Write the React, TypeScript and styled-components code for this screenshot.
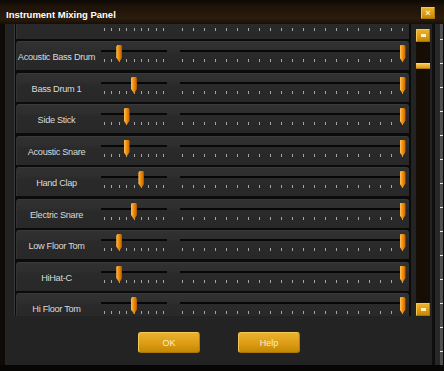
import React, { useLayoutEffect, useRef } from 'react'
import styled, { createGlobalStyle } from 'styled-components'

const GlobalStyle = createGlobalStyle`
  html, body {
    margin: 0;
    padding: 0;
    background: #070605;
  }
  body {
    font-family: 'Liberation Sans', Arial, sans-serif;
  }
`

type Instrument = { name: string; pan?: number; volume?: number }

// first entry is the row scrolled half out of view
const instruments: Instrument[] = [
  { name: '' },
  { name: 'Acoustic Bass Drum', pan: 2, volume: 20 },
  { name: 'Bass Drum 1', pan: 4, volume: 20 },
  { name: 'Side Stick', pan: 3, volume: 20 },
  { name: 'Acoustic Snare', pan: 3, volume: 20 },
  { name: 'Hand Clap', pan: 5, volume: 20 },
  { name: 'Electric Snare', pan: 4, volume: 20 },
  { name: 'Low Floor Tom', pan: 2, volume: 20 },
  { name: 'HiHat-C', pan: 2, volume: 20 },
  { name: 'Hi Floor Tom', pan: 4, volume: 20 },
]

const SCROLL_OFFSET = 17

const Screen = styled.div`
  width: 444px;
  height: 371px;
  display: flex;
  flex-direction: column;
  background: #070605;
  overflow: hidden;
`

const TitleBar = styled.div`
  height: 24px;
  flex-shrink: 0;
  box-sizing: border-box;
  display: flex;
  align-items: center;
  justify-content: space-between;
  padding: 2px 9px 0 6px;
  background: linear-gradient(#0c0804 0%, #1d1309 25%, #2b1c0c 78%, #160e06 100%);
`

const Title = styled.span`
  color: #ffffff;
  font-weight: bold;
  font-size: 9.5px;
  margin-top: 2px;
`

const GoldButton = styled.button`
  box-sizing: border-box;
  margin: 0;
  padding: 0;
  font-family: 'Liberation Sans', Arial, sans-serif;
  color: #fbeec4;
  background: linear-gradient(#eab22c 0%, #dc9c14 55%, #c48806 100%);
  border: 1px solid #f4c758;
  border-bottom-color: #a97408;
  border-right-color: #b37c0a;
  display: flex;
  align-items: center;
  justify-content: center;
`

const CloseButton = styled(GoldButton)`
  width: 14px;
  height: 12px;
  border-radius: 1px;
  font-size: 9px;
  font-weight: bold;
  line-height: 1;
`

const Middle = styled.div`
  height: 341px;
  flex-shrink: 0;
  display: flex;
`

const LeftFrame = styled.div`
  width: 5px;
  background: #0e0b07;
`

const Body = styled.div`
  width: 427px;
  box-sizing: border-box;
  border-left: 1px solid #2a241b;
  background: #232323;
  display: flex;
  flex-direction: column;
  padding-left: 8px;
`

const RightFrame = styled.div`
  width: 8px;
  box-sizing: border-box;
  border-left: 3px solid #0e0e0e;
  background: #272727;
`

const Outside = styled.div`
  width: 3px;
  background: repeating-linear-gradient(to bottom, #4f4f4f 0 15px, #e6e6e6 15px 16px, #4f4f4f 16px 24px);
`

const MainRow = styled.div`
  display: flex;
  height: 292px;
`

const ListPanel = styled.div`
  width: 397px;
  box-sizing: border-box;
  height: 100%;
  overflow: hidden;
  background: #0b0b0b;
  border-left: 1px solid #393939;
  padding: 0 2px 0 1px;
`

const Row = styled.div`
  height: 29px;
  margin-top: 2.5px;
  box-sizing: border-box;
  display: flex;
  border-top: 1px solid #393939;
  border-left: 1px solid #333333;
  border-radius: 3px 3px 0 0;
  background: linear-gradient(#313131 0px, #2e2e2e 8px, #2a2a2a 11px, #282828 100%);
`

const Label = styled.div`
  width: 79px;
  margin-right: 5px;
  display: flex;
  align-items: center;
  justify-content: center;
  padding-top: 2px;
  box-sizing: border-box;
  color: #dadada;
  font-size: 9.2px;
  letter-spacing: -0.3px;
  white-space: nowrap;
`

const SliderBox = styled.div<{ $width: number; $gap: number }>`
  position: relative;
  width: ${({ $width }) => $width}px;
  margin-left: ${({ $gap }) => $gap}px;
  box-sizing: border-box;
  padding-top: 8px;
  display: flex;
  flex-direction: column;
`

const Track = styled.div`
  height: 2px;
  background: #070707;
`

const Ticks = styled.div<{ $inset: number }>`
  display: flex;
  justify-content: space-between;
  margin-top: 7px;
  padding: 0 ${({ $inset }) => $inset}px;
`

const Tick = styled.span`
  width: 1px;
  height: 3px;
  background: #a6a6a6;
`

const Thumb = styled.span`
  position: absolute;
  top: 3px;
  width: 6px;
  height: 17px;
  background: linear-gradient(90deg, #ffc462 0%, #f39610 38%, #dc7600 72%, #9c5200 100%);
  clip-path: polygon(18% 0, 82% 0, 100% 10%, 100% 74%, 50% 100%, 0 74%, 0 10%);
`

const ScrollColumn = styled.div`
  width: 21px;
  box-sizing: border-box;
  padding: 5px 2px 0 5px;
  display: flex;
  flex-direction: column;
`

const ScrollArrow = styled(GoldButton)`
  width: 14px;
  height: 13px;
  flex-shrink: 0;
  border-radius: 1px;
  &::after {
    content: '';
    width: 5px;
    height: 3px;
    background: #fff0c4;
  }
`

const ScrollTrack = styled.div`
  position: relative;
  flex: 1;
  background: #160e05;
`

const ScrollThumb = styled.div`
  position: absolute;
  left: 0;
  right: 0;
  height: 6px;
  box-sizing: border-box;
  background: linear-gradient(#f6c458, #dc9c16);
  border-top: 1px solid #fbd57a;
  border-bottom: 1px solid #b07806;
`

const ButtonBar = styled.div`
  display: flex;
  justify-content: center;
  gap: 38px;
  padding: 16px 8px 0 0;
`

const DialogButton = styled(GoldButton)`
  width: 62px;
  height: 21px;
  border-radius: 3px;
  font-size: 9px;
`

type SliderProps = { width: number; gap: number; count: number; inset: number; value?: number }

const Slider = ({ width, gap, count, inset, value }: SliderProps) => {
  const span = width - inset * 2 - 1
  const center = value === undefined ? 0 : inset + 0.5 + (value / (count - 1)) * span

  return (
    <SliderBox $width={width} $gap={gap}>
      <Track />
      <Ticks $inset={inset}>
        {Array.from({ length: count }, (_, i) => (
          <Tick key={i} />
        ))}
      </Ticks>
      {value !== undefined && <Thumb style={{ left: center - 3 }} />}
    </SliderBox>
  )
}

const InstrumentRow = ({ item }: { item: Instrument }) => (
  <Row>
    <Label>{item.name}</Label>
    <Slider width={66} gap={0} count={9} inset={3} value={item.pan} />
    <Slider width={225} gap={13} count={21} inset={2} value={item.volume} />
  </Row>
)

export default function App() {
  const listRef = useRef<HTMLDivElement>(null)
  const scrollFraction = 0.08

  useLayoutEffect(() => {
    if (listRef.current) listRef.current.scrollTop = SCROLL_OFFSET
  }, [])

  return (
    <>
      <GlobalStyle />
      <Screen>
        <TitleBar>
          <Title>Instrument Mixing Panel</Title>
          <CloseButton>×</CloseButton>
        </TitleBar>
        <Middle>
          <LeftFrame />
          <Body>
            <MainRow>
              <ListPanel ref={listRef}>
                {instruments.map((item, i) => (
                  <InstrumentRow key={i} item={item} />
                ))}
              </ListPanel>
              <ScrollColumn>
                <ScrollArrow />
                <ScrollTrack>
                  <ScrollThumb style={{ top: `${scrollFraction * 100}%` }} />
                </ScrollTrack>
                <ScrollArrow />
              </ScrollColumn>
            </MainRow>
            <ButtonBar>
              <DialogButton>OK</DialogButton>
              <DialogButton>Help</DialogButton>
            </ButtonBar>
          </Body>
          <RightFrame />
          <Outside />
        </Middle>
      </Screen>
    </>
  )
}
